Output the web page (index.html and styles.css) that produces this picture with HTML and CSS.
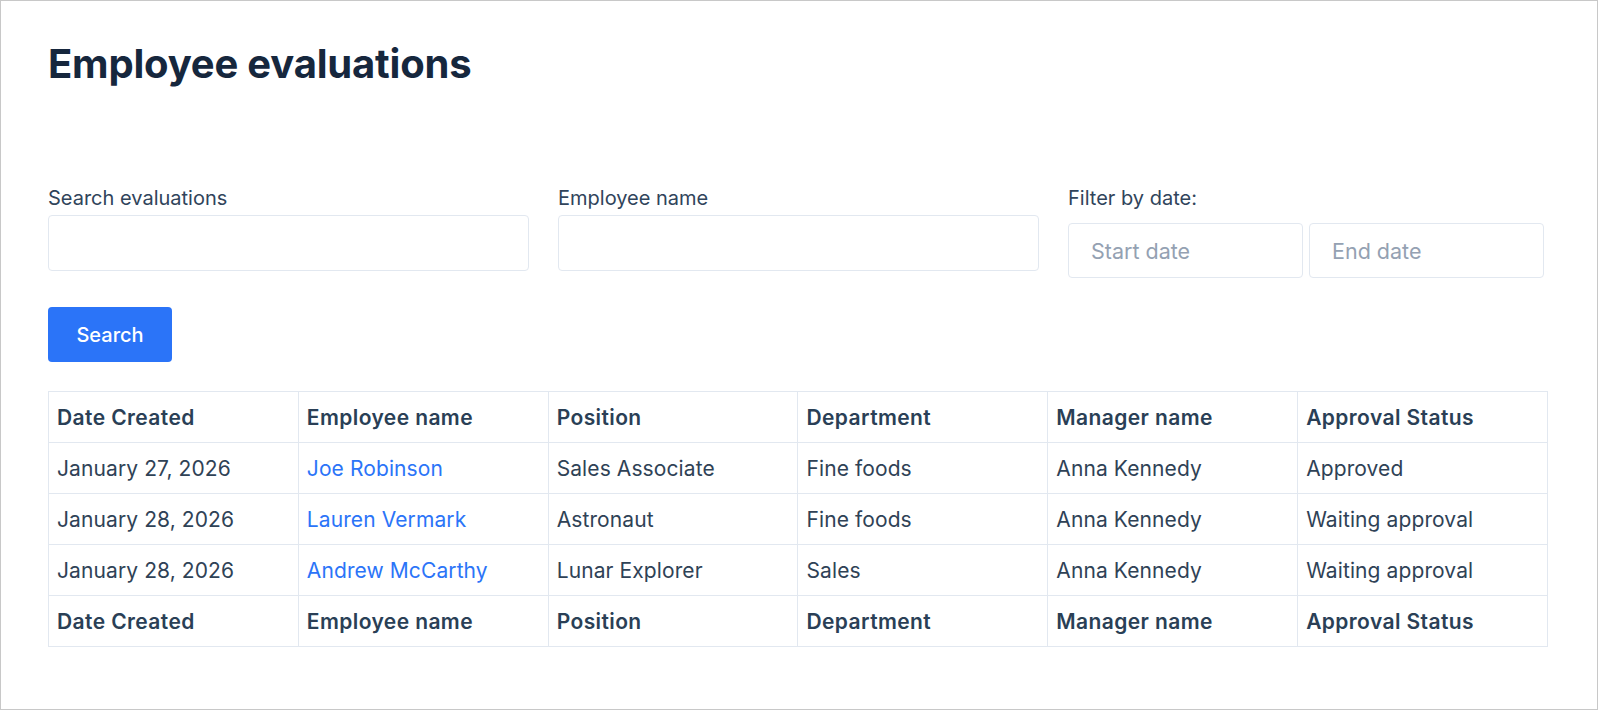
FILE: index.html
```html
<!DOCTYPE html>
<html lang="en">
<head>
<meta charset="utf-8">
<title>Employee evaluations</title>
<link rel="stylesheet" href="styles.css">
</head>
<body>
<div class="frame">
  <main class="page">
    <h1 class="title">Employee evaluations</h1>
    <form class="filters">
      <div class="field">
        <label class="label">Search evaluations</label>
        <input class="input" type="text">
      </div>
      <div class="field">
        <label class="label">Employee name</label>
        <input class="input" type="text">
      </div>
      <div class="field">
        <label class="label">Filter by date:</label>
        <div class="dates">
          <input class="input date" type="text" placeholder="Start date">
          <input class="input date" type="text" placeholder="End date">
        </div>
      </div>
    </form>
    <button class="btn" type="button">Search</button>
    <table class="table">
      <thead>
        <tr><th>Date Created</th><th>Employee name</th><th>Position</th><th>Department</th><th>Manager name</th><th>Approval Status</th></tr>
      </thead>
      <tbody>
        <tr><td>January 27, 2026</td><td><a class="link" href="#">Joe Robinson</a></td><td>Sales Associate</td><td>Fine foods</td><td>Anna Kennedy</td><td>Approved</td></tr>
        <tr><td>January 28, 2026</td><td><a class="link" href="#">Lauren Vermark</a></td><td>Astronaut</td><td>Fine foods</td><td>Anna Kennedy</td><td>Waiting approval</td></tr>
        <tr><td>January 28, 2026</td><td><a class="link" href="#">Andrew McCarthy</a></td><td>Lunar Explorer</td><td>Sales</td><td>Anna Kennedy</td><td>Waiting approval</td></tr>
      </tbody>
      <tfoot>
        <tr><th>Date Created</th><th>Employee name</th><th>Position</th><th>Department</th><th>Manager name</th><th>Approval Status</th></tr>
      </tfoot>
    </table>
  </main>
</div>
</body>
</html>
```

FILE: styles.css
```css
* { box-sizing: border-box; }
html, body { margin: 0; padding: 0; background: #fff; }
body { font-family: Inter, "Noto Sans", "Liberation Sans", sans-serif; color: #2f4256; }

.frame {
  width: 1598px;
  height: 710px;
  border: 1px solid #c8c8c8;
  overflow: hidden;
}

.page { padding: 39px 0 0 47px; }

.title {
  margin: 0;
  font-size: 40px;
  line-height: 48px;
  font-weight: 700;
  color: #16273d;
  letter-spacing: -0.2px;
}

.filters {
  display: grid;
  grid-template-columns: 481px 481px 481px;
  column-gap: 29px;
  margin-top: 97px;
  width: 1501px;
}

.field { display: flex; flex-direction: column; }

.label {
  font-size: 20px;
  line-height: 26px;
  color: #30445b;
  margin-bottom: 4px;
}

.input {
  height: 56px;
  width: 100%;
  border: 1px solid #e2e8f0;
  border-radius: 4px;
  padding: 0 22px;
  font-family: inherit;
  font-size: 21.5px;
  color: #2f4256;
  background: #fff;
  outline: none;
}
.input::placeholder { color: #94a1b2; }

.dates {
  display: flex;
  gap: 6px;
  margin-top: 8px;
}
.date { width: 235px; height: 55px; }

.btn {
  display: block;
  margin-top: 29px;
  width: 124px;
  height: 55px;
  border: 0;
  border-radius: 4px;
  background: #2b74f8;
  color: #fff;
  font-family: inherit;
  font-size: 20px;
  font-weight: 500;
  cursor: pointer;
}

.table {
  margin-top: 29px;
  width: 1500px;
  table-layout: fixed;
  border-collapse: collapse;
  font-size: 21px;
}
.table th, .table td {
  border: 1px solid #e2e8f0;
  height: 51px;
  padding: 0 8px;
  text-align: left;
  white-space: nowrap;
  color: #2f4256;
}
.table th { font-weight: 600; color: #2a3f56; letter-spacing: 0.4px; }
.table td { font-weight: 400; letter-spacing: 0.1px; }

.link { color: #2b74f8; text-decoration: none; }
```
